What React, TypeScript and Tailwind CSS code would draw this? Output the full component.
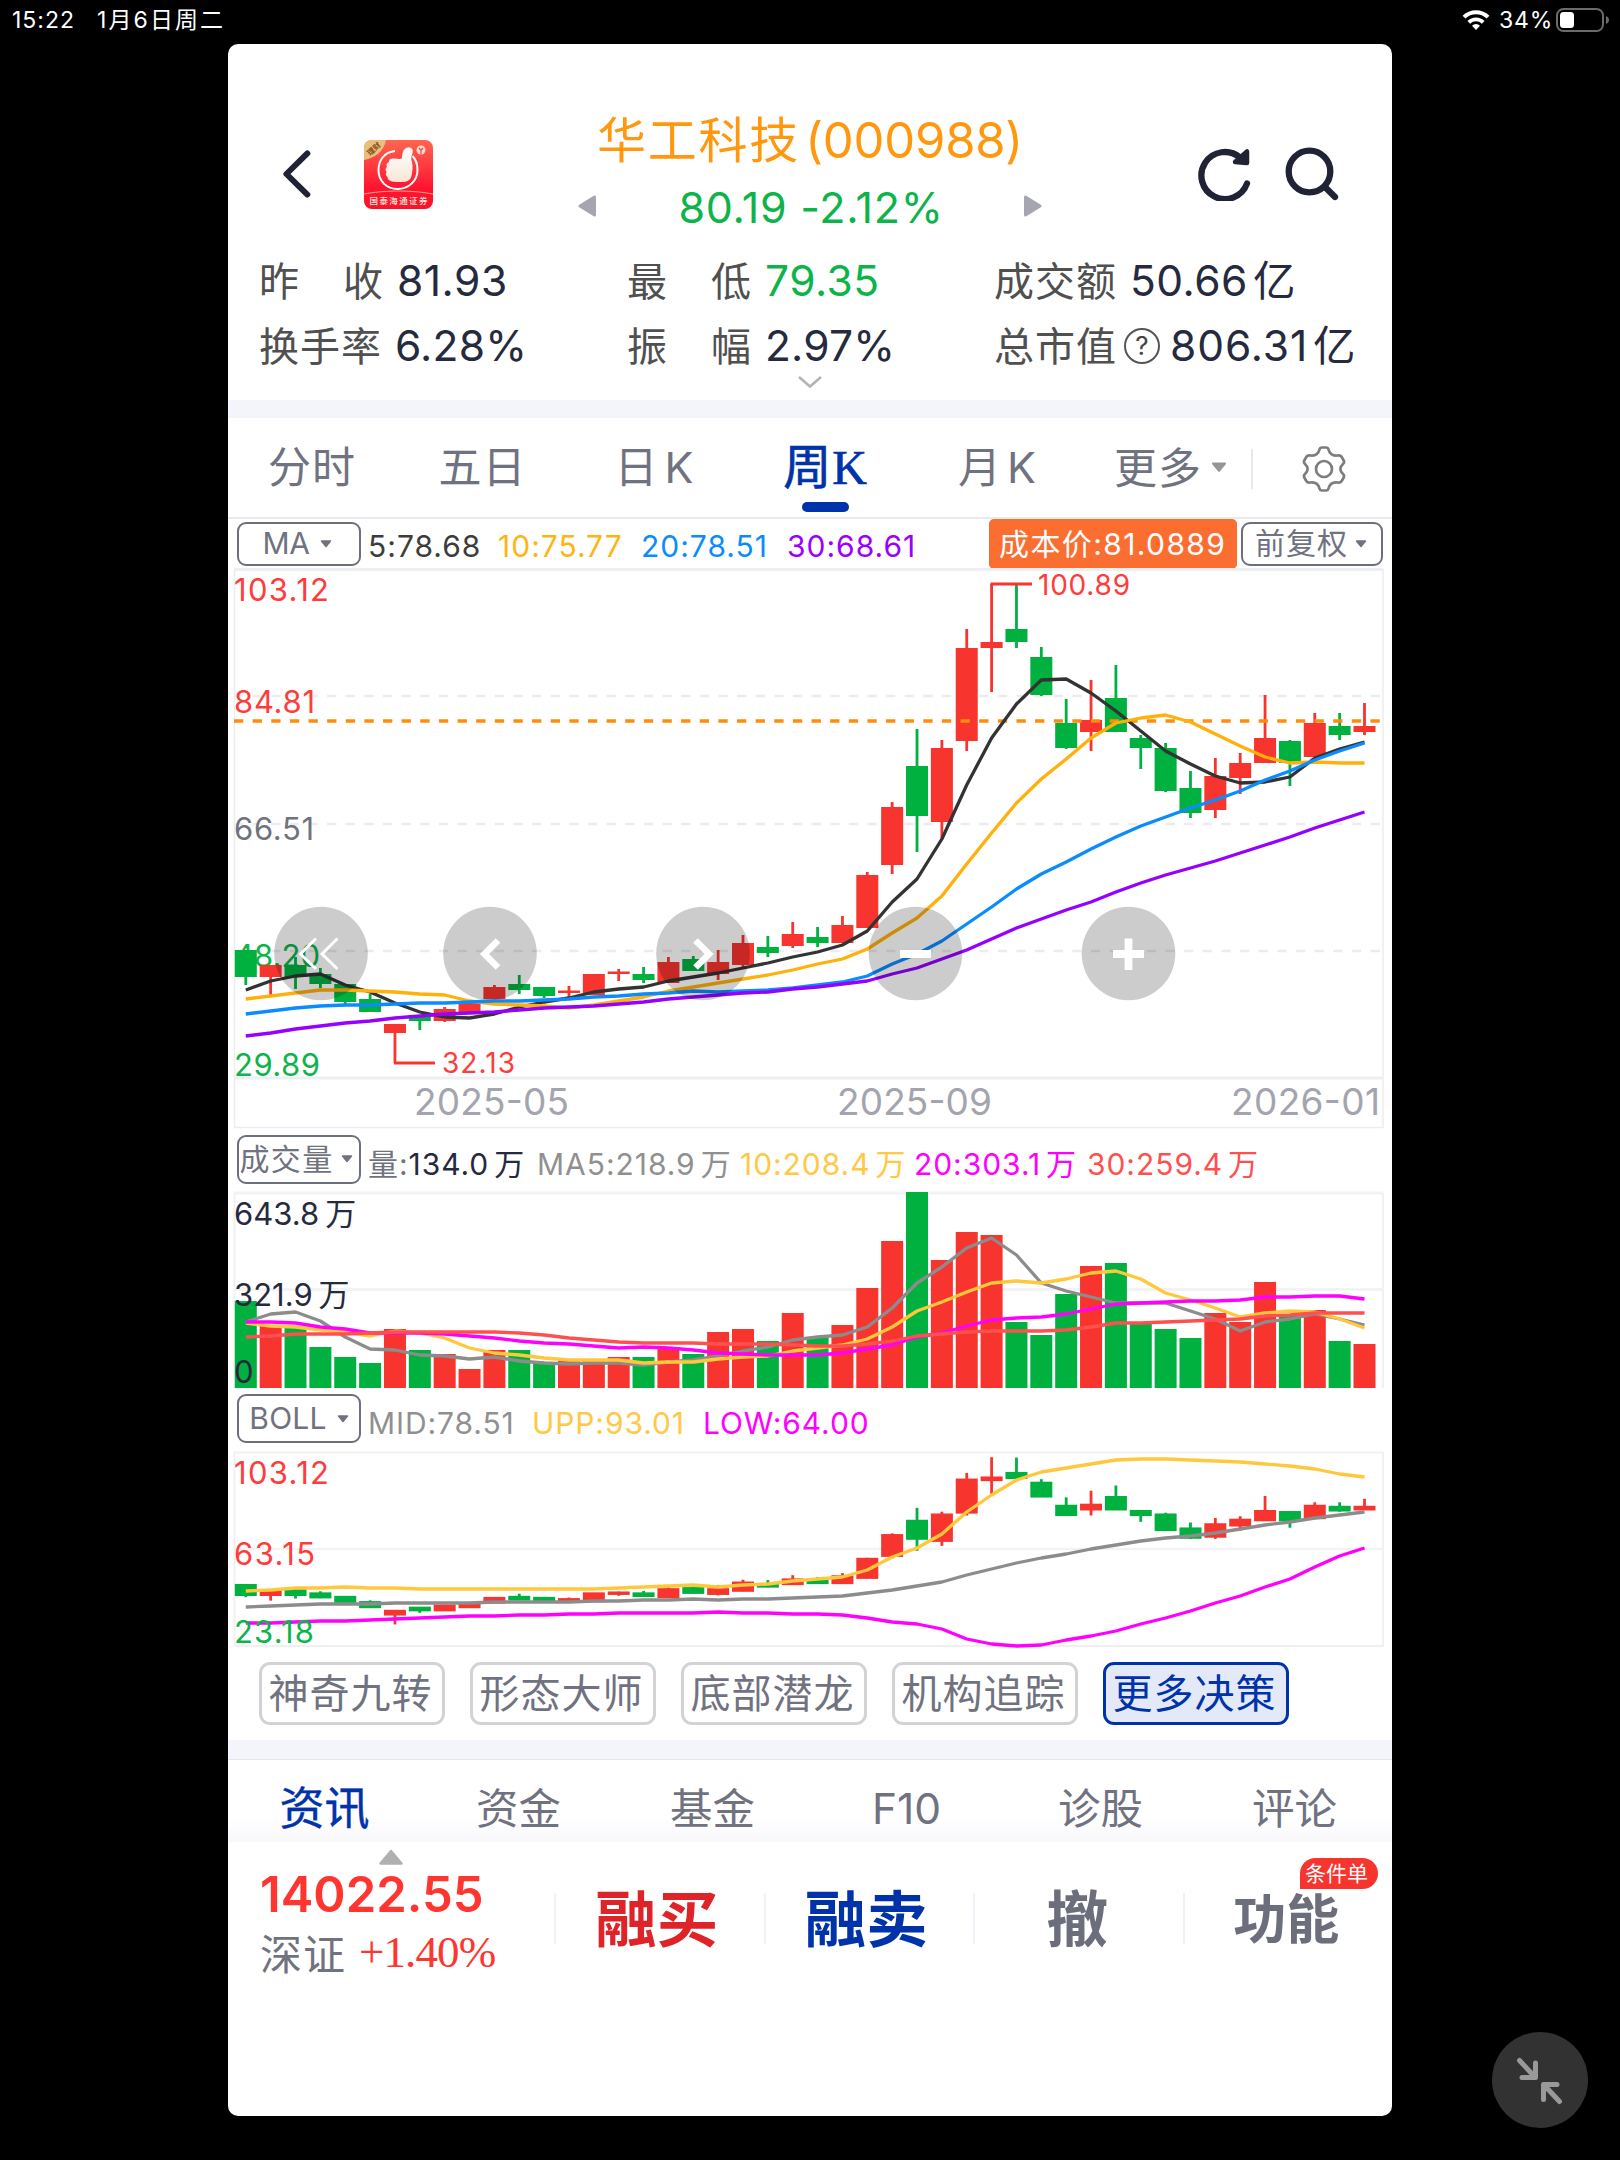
import type { ReactNode } from "react"
import clsx from "clsx"

// [up, bodyTop, bodyBottom, high, low] in chart pixels
type Candle = [number, number, number, number, number]

const CANDLES: Candle[] = [
  [0, 950, 977, 950, 985],
  [1, 965, 977, 965, 995],
  [0, 965, 977, 957, 989],
  [0, 974, 984, 968, 988],
  [0, 984, 1002, 984, 1004],
  [0, 999, 1012, 994, 1012],
  [1, 1024, 1033, 1024, 1063],
  [0, 1015, 1021, 1015, 1030],
  [1, 1009, 1021, 1007, 1022],
  [1, 1002, 1012, 1002, 1012],
  [1, 987, 999, 985, 999],
  [0, 984, 990, 975, 994],
  [0, 987, 996, 987, 998],
  [1, 990.5, 993, 986, 998],
  [1, 974, 995, 974, 995],
  [1, 971.5, 974, 969, 981],
  [0, 974, 980, 967, 983],
  [1, 962, 983, 957, 983],
  [0, 959, 971, 956, 971],
  [1, 962, 974, 950, 980],
  [1, 943, 965, 935, 968],
  [0, 947, 953, 936, 957],
  [1, 934, 946, 922, 948],
  [0, 937, 943, 927, 947],
  [1, 925, 943, 916, 943],
  [1, 875, 928, 872, 928],
  [1, 807, 865, 802, 874],
  [0, 766, 816, 729, 852],
  [1, 748, 822, 740, 838],
  [1, 648, 741, 629, 751],
  [1, 642, 648, 584, 692],
  [0, 629, 642, 585, 648],
  [0, 657, 695, 647, 696],
  [0, 723, 748, 699, 749],
  [1, 720, 732, 680, 751],
  [0, 698, 732, 665, 732],
  [0, 738, 748, 735, 769],
  [0, 748, 791, 743, 792],
  [0, 788, 813, 771, 818],
  [1, 776, 810, 758, 818],
  [1, 763, 778, 753, 794],
  [1, 738, 763, 695, 763],
  [0, 741, 763, 740, 786],
  [1, 723, 757, 713, 757],
  [0, 726, 735, 713, 740],
  [1, 726, 732, 703, 735],
]

const MA5 = [990, 981, 976, 974, 985, 992, 1003, 1012, 1017, 1018, 1014, 1007, 1002, 998, 992, 989, 987, 981, 977, 973, 968, 963, 957, 952, 945, 931, 902, 879, 839, 785, 738, 704, 680, 679, 693, 711, 731, 751, 764, 776, 783, 782, 777, 758, 749, 742]
const MA10 = [999, 996, 993, 990, 990, 991, 992, 994, 995, 1001, 1004, 1005, 1006, 1008, 1005, 1001, 997, 991, 987, 983, 979, 975, 970, 964, 959, 949, 933, 918, 896, 864, 833, 803, 779, 759, 738, 723, 718, 715, 722, 734, 746, 757, 763, 762, 763, 763]
const MA20 = [1014, 1011, 1008, 1006, 1005, 1005, 1004, 1003, 1003, 1002, 1001, 1001, 1000, 999, 997, 996, 994, 993, 991, 992, 991, 990, 988, 985, 982, 976, 964, 954, 941, 924, 907, 889, 874, 862, 849, 837, 826, 817, 808, 800, 791, 780, 771, 760, 751, 743]
const MA30 = [1036, 1033, 1029, 1026, 1023, 1021, 1018, 1016, 1014, 1013, 1012, 1010, 1008, 1007, 1006, 1004, 1002, 999, 997, 995, 993, 992, 989, 987, 984, 981, 974, 968, 959, 950, 939, 928, 919, 910, 902, 892, 883, 875, 868, 861, 853, 845, 837, 828, 820, 812]

const VOLUME = [1301, 1326, 1328, 1347, 1357, 1363, 1329, 1350, 1354, 1369, 1350, 1350, 1363, 1361, 1361, 1357, 1357, 1347, 1354, 1332, 1329, 1341, 1313, 1338, 1325, 1288, 1241, 1192, 1260, 1232, 1235, 1322, 1335, 1294, 1266, 1263, 1324, 1329, 1338, 1313, 1322, 1282, 1316, 1310, 1341, 1344]
const V5 = [1322, 1314, 1312, 1321, 1337, 1349, 1350, 1355, 1356, 1359, 1357, 1361, 1363, 1364, 1363, 1363, 1365, 1362, 1360, 1356, 1351, 1347, 1340, 1337, 1335, 1327, 1308, 1283, 1267, 1248, 1238, 1255, 1283, 1291, 1297, 1303, 1303, 1303, 1311, 1319, 1331, 1322, 1319, 1314, 1319, 1325]
const V10 = [1323, 1326, 1327, 1330, 1332, 1336, 1331, 1333, 1338, 1348, 1353, 1355, 1358, 1360, 1360, 1360, 1363, 1362, 1362, 1359, 1357, 1356, 1351, 1348, 1345, 1339, 1327, 1311, 1302, 1292, 1283, 1281, 1283, 1279, 1273, 1271, 1279, 1293, 1300, 1308, 1317, 1313, 1311, 1312, 1319, 1328]
const V20 = [1322, 1322, 1323, 1327, 1329, 1333, 1333, 1333, 1334, 1336, 1338, 1341, 1343, 1344, 1346, 1348, 1347, 1348, 1350, 1353, 1354, 1355, 1355, 1355, 1353, 1349, 1345, 1337, 1333, 1326, 1320, 1318, 1317, 1314, 1309, 1304, 1303, 1302, 1301, 1301, 1300, 1297, 1297, 1296, 1296, 1299]
const V30 = [1337, 1336, 1334, 1334, 1334, 1333, 1332, 1332, 1332, 1332, 1332, 1333, 1335, 1338, 1340, 1342, 1343, 1343, 1343, 1344, 1344, 1344, 1345, 1346, 1346, 1344, 1341, 1336, 1334, 1332, 1331, 1331, 1331, 1330, 1327, 1323, 1323, 1322, 1321, 1320, 1319, 1316, 1315, 1313, 1313, 1313]

const UPP = [1591, 1590, 1588, 1588, 1587, 1588, 1588, 1589, 1589, 1589, 1589, 1589, 1589, 1589, 1589, 1588, 1587, 1586, 1585, 1587, 1585, 1584, 1581, 1579, 1577, 1570, 1557, 1548, 1534, 1512, 1495, 1480, 1472, 1468, 1464, 1460, 1459, 1459, 1460, 1461, 1462, 1464, 1466, 1469, 1474, 1477]
const MID = [1607, 1606, 1605, 1604, 1604, 1604, 1603, 1603, 1603, 1603, 1602, 1602, 1602, 1602, 1601, 1601, 1600, 1600, 1599, 1600, 1599, 1599, 1598, 1597, 1596, 1593, 1590, 1586, 1582, 1575, 1569, 1563, 1558, 1554, 1549, 1545, 1541, 1538, 1536, 1533, 1529, 1525, 1522, 1518, 1515, 1512]
const LOW = [1623, 1623, 1622, 1621, 1621, 1620, 1619, 1618, 1617, 1616, 1616, 1615, 1615, 1614, 1614, 1613, 1613, 1613, 1613, 1612, 1613, 1613, 1614, 1614, 1615, 1618, 1622, 1624, 1629, 1639, 1644, 1646, 1645, 1640, 1636, 1631, 1624, 1618, 1611, 1603, 1596, 1587, 1579, 1567, 1556, 1548]

const RED = "#f8342e"
const GREEN = "#00b140"

const cx = (i: number) => 245.8 + i * 24.86
const bollY = (y: number) => 1452 + (y - 569) * 0.349

function Line({ data, color }: { data: number[]; color: string }) {
  return (
    <polyline
      points={data.map((y, i) => `${cx(i).toFixed(1)},${y}`).join(" ")}
      fill="none"
      stroke={color}
      strokeWidth="3.300"
      strokeLinejoin="round"
    />
  )
}

type LabelProps = { x: number; y: number; w: number; size?: number; fill: string; children: ReactNode }

function Label({ x, y, w, size = 31, fill, children }: LabelProps) {
  return (
    <text x={x} y={y} textLength={w} fontSize={size} fill={fill}>
      {children}
    </text>
  )
}

function Caret({ className }: { className?: string }) {
  return (
    <svg viewBox="0 0 12 8" className={clsx("h-2 w-3 shrink-0", className)}>
      <path d="M1.5 1h9L6 6.500z" fill="currentColor" stroke="currentColor" strokeWidth="1.500" strokeLinejoin="round" />
    </svg>
  )
}

// Keeps a small gap between the digits and their unit
function WithUnit({ value, unit }: { value: string; unit: string }) {
  return (
    <>
      {value}
      <span className="ml-[5px]">{unit}</span>
    </>
  )
}

function Legend({ items }: { items: Array<{ text: ReactNode; className: string }> }) {
  return (
    <>
      {items.map((item, i) => (
        <span key={i} className={clsx("shrink-0", item.className)}>
          {item.text}
        </span>
      ))}
    </>
  )
}

function StatusBar() {
  return (
    <div className="flex h-[44px] items-start justify-between pt-[4px] pr-[10px] pl-[12px] text-[23px] leading-[32px] text-white">
      <div className="flex">
        <span className="w-[85px] tracking-[1px]">15:22</span>
        <span className="tracking-[2.1px]">1月6日周二</span>
      </div>
      <div className="flex items-center">
        <svg viewBox="0 0 28 20" className="mr-[9px] h-5 w-7">
          <path d="M2 7.200a17 17 0 0 1 24 0" fill="none" stroke="white" strokeWidth="4" />
          <path d="M6.800 12.300a10.200 10.200 0 0 1 14.400 0" fill="none" stroke="white" strokeWidth="3.800" />
          <path d="M14 20l-4-4.200a5.600 5.600 0 0 1 8 0z" fill="white" />
        </svg>
        <span className="w-[57px] tracking-[0.8px]">34%</span>
        <svg viewBox="0 0 54 24" className="h-6 w-[54px]">
          <rect x="1" y="1" width="46" height="22" rx="6.500" fill="none" stroke="#6b6b6b" strokeWidth="2" />
          <rect x="4" y="4" width="14" height="16" rx="3.500" fill="white" />
          <path d="M50 8c4 1.500 4 6.500 0 8z" fill="#6b6b6b" />
        </svg>
      </div>
    </div>
  )
}

function BrokerLogo() {
  return (
    <svg viewBox="0 0 69 69" className="ml-[53px] h-[69px] w-[69px] rounded-[8px]">
      <defs>
        <linearGradient id="logo-bg" x1="0" y1="0" x2="0" y2="1">
          <stop offset="0" stopColor="#ff6650" />
          <stop offset="0.700" stopColor="#ff1430" />
          <stop offset="1" stopColor="#fa1428" />
        </linearGradient>
        <linearGradient id="logo-hand" x1="0" y1="0" x2="0" y2="1">
          <stop offset="0" stopColor="#ffffff" />
          <stop offset="1" stopColor="#f7e6d6" />
        </linearGradient>
      </defs>
      <rect width="69" height="69" fill="url(#logo-bg)" />
      <path d="M0 0h22C20 11 11 18 0 20z" fill="#e9bf7c" />
      <text x="10" y="11.500" textAnchor="middle" fontSize="7.500" fontWeight="700" fill="#8a4a18" transform="rotate(-42 10 9)">
        理财
      </text>
      <path d="M31 11C20 12 14.500 21 14.500 30c0 11 8 19 19 19s20-8 20-19c0-6-2-11-5-14" fill="none" stroke="#fff" strokeWidth="2" />
      <path
        d="M38 18c0-6 2-10 6-10.500c4-.5 5.500 2.500 4.500 5.500c-1.500 4-1.500 6-.5 9c1 4 .5 9-.5 14c-1 4-4 6-10 6c-9 .5-14-1-14-5c-2-1-2-4-.8-5c-1.600-1.500-1.400-4 .3-5c-1-2-.3-4.500 2-5c0-3 2-4 5-3.500c3 .5 7 1 8-.5z"
        fill="url(#logo-hand)"
      />
      <circle cx="57" cy="10" r="4.500" fill="#ffd9cf" />
      <path d="M55 8l2 2.300L59 8M57 10v4" fill="none" stroke="#f0443c" strokeWidth="1.200" />
      <path d="M0 54c20-4 49-4 69 0" fill="none" stroke="#ff9d84" strokeWidth="1.200" />
      <text x="5.500" y="64" textLength="58" fontSize="8.500" fontWeight="500" fill="#ffe3d8">
        国泰海通证券
      </text>
    </svg>
  )
}

function Header() {
  return (
    <header className="h-[356px] pt-[64px] text-[#262a3e]">
      <div className="flex h-[132px] items-center">
        <div className="flex w-[350px] items-center pl-[52px]">
          <svg viewBox="0 0 34 56" className="h-14 w-[31px]">
            <path d="M30 5.500L7 28 30 50.500" fill="none" stroke="#1f2335" strokeWidth="6.500" strokeLinecap="round" strokeLinejoin="round" />
          </svg>
          <BrokerLogo />
        </div>
        <div className="flex w-[464px] flex-col">
          <h1 className="text-center text-[49px] leading-[66px] tracking-[1.8px] whitespace-nowrap text-[#ff980f]">
            华工科技<span className="ml-[5px] tracking-[-0.2px]">(000988)</span>
          </h1>
          <div className="flex h-[66px] items-center justify-between">
            <svg viewBox="0 0 18 22" className="-mt-[3px] h-[22px] w-[18px]">
              <path d="M16.500 2v18L2 11z" fill="#a5a6b0" stroke="#a5a6b0" strokeWidth="3" strokeLinejoin="round" />
            </svg>
            <span className="pl-[2px] text-[43px] leading-[66px] tracking-[0.7px] text-[#0cb44a]">80.19 -2.12%</span>
            <svg viewBox="0 0 18 22" className="-mt-[3px] h-[22px] w-[18px]">
              <path d="M1.500 2v18L16 11z" fill="#a5a6b0" stroke="#a5a6b0" strokeWidth="3" strokeLinejoin="round" />
            </svg>
          </div>
        </div>
        <div className="flex w-[350px] items-center justify-end gap-[34px] pr-[53px]">
          <svg viewBox="0 0 54 54" className="h-[54px] w-[54px]">
            <path d="M50 36.500A23.500 23.500 0 1 1 43 10.500" fill="none" stroke="#1f2335" strokeWidth="6.300" strokeLinecap="round" />
            <path d="M50 4.500v11.500l-12-1z" fill="#1f2335" stroke="#1f2335" strokeWidth="4.500" strokeLinejoin="round" />
          </svg>
          <svg viewBox="0 0 54 54" className="h-[54px] w-[54px]">
            <circle cx="24.500" cy="24.500" r="20.800" fill="none" stroke="#1f2335" strokeWidth="6.300" />
            <path d="M41 41l9 9" stroke="#1f2335" strokeWidth="6.300" strokeLinecap="round" />
          </svg>
        </div>
      </div>

      <div className="mt-[8px] grid grid-cols-[368px_367px_1fr] grid-rows-[65px_65px] pl-[31px] text-[42.5px] leading-[65px] whitespace-nowrap">
        <Stat label="昨收" value="81.93" />
        <Stat label="最低" value="79.35" className="text-[#0cb44a]" />
        <Stat label="成交额" value={<WithUnit value="50.66" unit="亿" />} />
        <Stat label="换手率" value="6.28%" className="tracking-[0.2px]!" />
        <Stat label="振幅" value="2.97%" className="tracking-[0.2px]!" />
        <Stat
          label="总市值"
          value={<WithUnit value="806.31" unit="亿" />}
          className="tracking-[0.9px]!"
          badge={
            <span className="mr-[10px] ml-[8px] flex h-9 w-9 items-center justify-center rounded-full border-[2px] border-[#555] text-[26px] leading-none text-[#444]">
              ?
            </span>
          }
        />
      </div>
      <svg viewBox="0 0 26 14" className="mx-auto -mt-[3px] block h-[14px] w-[26px]">
        <path d="M2 2l11 9.500L24 2" fill="none" stroke="#b4b4b4" strokeWidth="2.500" />
      </svg>
    </header>
  )
}

function Stat({ label, value, badge, className }: { label: string; value: ReactNode; badge?: ReactNode; className?: string }) {
  return (
    <div className="flex items-center">
      <span
        className={clsx("flex justify-between pt-[2px] text-[40px] leading-[63px] text-[#505050]", label.length === 2 ? "w-[124px]" : "w-[122px]")}
      >
        {label.split("").map((char) => (
          <span key={char}>{char}</span>
        ))}
      </span>
      {badge ?? <span className="w-[14px]" />}
      <span className={clsx("tracking-[0.5px]", className)}>{value}</span>
    </div>
  )
}

function PeriodTabs() {
  return (
    <nav className="flex h-[101px] border-b-2 border-[#ebebee] text-[43px] leading-[98px] tracking-[1px] text-[#70727f]">
      <span className="w-[168px] text-center">分时</span>
      <span className="w-[168px] pl-[5px] text-center">五日</span>
      <span className="w-[186px] pr-[5px] text-center">
        日<span className="ml-[6px]">K</span>
      </span>
      <span className="flex w-[151px] flex-col items-center text-[#0032aa]">
        <span className="h-[84px] text-[48px] leading-[99px] [-webkit-text-stroke:0.7px_#0032aa] [font-family:'Liberation_Serif','Noto_Sans_CJK_SC',serif]">
          周K
        </span>
        <span className="h-[10px] w-[47px] rounded-full bg-[#0032aa]" />
      </span>
      <span className="w-[193px] text-center">
        月<span className="ml-[5px]">K</span>
      </span>
      <span className="flex w-[157px] items-center pl-[20px]">
        更多
        <Caret className="ml-[9px] h-[11px]! w-[16px]! text-[#969696]" />
      </span>
      <span className="mt-[31px] h-[40px] w-[2px] bg-[#e8e8ec]" />
      <svg viewBox="0 0 44 46" className="mt-[28px] ml-[49px] h-[46px] w-[44px]">
        <path
          d="M17.500 3.500Q18 1.500 20 1.500h4q2 0 2.500 2c1 4 4 6.500 9 6q3-.5 4.200 1.500l2 3.500q1 2-.7 3.500c-3.500 3-3.500 7 0 10q1.700 1.500.7 3.500l-2 3.500q-1.200 2-4.200 1.500c-5-.5-8 2-9 6q-.5 2-2.500 2h-4q-2 0-2.500-2c-1-4-4-6.500-9-6q-3 .5-4.200-1.500l-2-3.500q-1-2 .7-3.500c3.500-3 3.500-7 0-10q-1.700-1.500-.7-3.500l2-3.500q1.200-2 4.200-1.500c5 .5 8-2 9-6z"
          fill="none"
          stroke="#7d7d7d"
          strokeWidth="2.700"
        />
        <circle cx="22" cy="23" r="8" fill="none" stroke="#7d7d7d" strokeWidth="2.700" />
      </svg>
    </nav>
  )
}

const boxClass = "flex shrink-0 items-center justify-center rounded-[9px] border-2 border-[#6c6f7e] text-[#70727f]"

function PriceChart() {
  return (
    <section>
      <div className="flex h-[49px] items-center pl-[9px] text-[30px] whitespace-nowrap">
        <div className={clsx(boxClass, "h-[44px] w-[124px] pr-[3px] tracking-[-0.5px]")}>
          MA
          <Caret className="ml-[11px]" />
        </div>
        <div className="flex w-[628px] pt-[4px] pl-[7px] leading-[44px] tracking-[1px]">
          <Legend
            items={[
              { text: "5:78.68", className: "w-[130px] text-[#3c3c3c]" },
              { text: "10:75.77", className: "w-[143px] text-[#ffb414]" },
              { text: "20:78.51", className: "w-[146px] text-[#0a8cff]" },
              { text: "30:68.61", className: "text-[#9b00ff]" },
            ]}
          />
        </div>
        <div className="h-[50px] w-[248px] rounded-[5px] bg-[#fa6e32] pl-[10px] leading-[51px] tracking-[1.4px] text-white">成本价:81.0889</div>
        <div className={clsx(boxClass, "ml-[4px] h-[44px] w-[142px] pr-[2px]")}>
          <span className="tracking-[1px]">前复权</span>
          <Caret className="ml-[7px]" />
        </div>
      </div>

      <svg viewBox="228 568 1164 562" className="block h-[562px] w-[1164px]">
        <path d="M234 569.500H1383M234 1078H1383" stroke="#edeff0" strokeWidth="3" />
        <path d="M234.500 569V1127.500H1383V569" fill="none" stroke="#ebedee" strokeWidth="1.500" />
        <path d="M234 696H1381M234 824H1381M234 951H1381" stroke="#ececee" strokeWidth="2.500" strokeDasharray="9.300 9.330" />
        <Label x={234} y={601} w={95} fill="#ff3c3c">103.12</Label>
        <Label x={234} y={712.5} w={81} fill="#ff3c3c">84.81</Label>
        <Label x={234} y={840} w={80} fill="#70727f">66.51</Label>
        <Label x={234} y={966.5} w={86} fill="#0cb44a">48.20</Label>
        <Label x={234} y={1076} w={86} fill="#0cb44a">29.89</Label>
        {CANDLES.map(([up, top, bottom, high, low], i) => (
          <g key={i} fill={up ? RED : GREEN}>
            <rect x={cx(i) - 1.4} y={high} width="2.800" height={low - high} />
            <rect x={cx(i) - 11} y={top} width="22" height={bottom - top} />
          </g>
        ))}
        <path d="M990.500 584H1032M394 1063H435" stroke={RED} strokeWidth="2.800" />
        <Label x={1038} y={594.5} w={92} size={28} fill="#ff3c3c">100.89</Label>
        <Label x={442} y={1072.5} w={73} size={28} fill="#ff3c3c">32.13</Label>
        <path d="M234 721H1381" stroke="#ff8c0a" strokeWidth="3.300" strokeDasharray="9.300 9.330" />
        <Line data={MA5} color="#333333" />
        <Line data={MA10} color="#ffb00a" />
        <Line data={MA20} color="#0a8cff" />
        <Line data={MA30} color="#9600ff" />
        <Label x={414} y={1115} w={155} size={37} fill="#a3a4ad">2025-05</Label>
        <Label x={837} y={1115} w={155} size={37} fill="#a3a4ad">2025-09</Label>
        <Label x={1231} y={1115} w={149} size={37} fill="#a3a4ad">2026-01</Label>

        {[321, 490, 703, 915.5, 1128.5].map((x) => (
          <circle key={x} cx={x} cy="953.500" r="46.800" fill="#000" fillOpacity="0.200" />
        ))}
        <g fill="none" stroke="#fff">
          <path d="M316 938.500L300.500 954 316 969M337.500 938.500L322 954l15.500 15" strokeWidth="3" />
          <path d="M498 940.500L484.500 954l13.500 13.500" strokeWidth="6.500" />
          <path d="M695.500 940.500L709 954l-13.500 13.500" strokeWidth="6.500" />
          <path d="M900 954h31M1113 954h31M1128.500 938.500v31.500" strokeWidth="7.800" />
        </g>
      </svg>
    </section>
  )
}

function VolumeChart() {
  return (
    <section>
      <div className="flex h-[60px] items-center pl-[9px] text-[30px] whitespace-nowrap">
        <div className={clsx(boxClass, "-mt-[2px] h-[49px] w-[124px] pr-[5px]")}>
          <span className="tracking-[1.3px]">成交量</span>
          <Caret className="ml-[8px]" />
        </div>
        <div className="flex pt-[8px] pl-[7px] leading-[44px] tracking-[0.95px]">
          <Legend
            items={[
              {
                text: (
                  <>
                    量:
                    <span className="text-[#262a3e]">
                      <WithUnit value="134.0" unit="万" />
                    </span>
                  </>
                ),
                className: "w-[169px] text-[#70727f]",
              },
              { text: <WithUnit value="MA5:218.9" unit="万" />, className: "w-[203px] text-[#909090]" },
              { text: <WithUnit value="10:208.4" unit="万" />, className: "w-[174px] text-[#ffc846]" },
              { text: <WithUnit value="20:303.1" unit="万" />, className: "w-[173px] text-[#ff00ff]" },
              { text: <WithUnit value="30:259.4" unit="万" />, className: "text-[#ff5050]" },
            ]}
          />
        </div>
      </div>
      <svg viewBox="228 1190 1164 200" className="block h-[200px] w-[1164px]">
        <path d="M234 1193H1383M234 1289.500H1383" stroke="#f3f3f5" strokeWidth="3" />
        <path d="M234.500 1193V1388M1383 1193V1388" stroke="#f0f0f2" strokeWidth="1.800" />
        {VOLUME.map((top, i) => (
          <rect key={i} x={cx(i) - 11} y={top} width="22" height={1388 - top} fill={CANDLES[i][0] ? RED : GREEN} />
        ))}
        <Line data={V5} color="#8c8c8c" />
        <Line data={V10} color="#ffc83c" />
        <Line data={V20} color="#ff00ff" />
        <Line data={V30} color="#ff5050" />
        <text x="234" y="1225" fontSize="31" fill="#262a3e">
          643.8<tspan dx="6">万</tspan>
        </text>
        <text x="234" y="1305.500" fontSize="31" fill="#262a3e">
          321.9<tspan dx="6">万</tspan>
        </text>
        <Label x={234} y={1383} w={19} fill="#262a3e">0</Label>
      </svg>
    </section>
  )
}

function BollChart() {
  return (
    <section>
      <div className="flex h-[60px] items-center pl-[9px] text-[30px] whitespace-nowrap">
        <div className={clsx(boxClass, "-mt-[3px] h-[49px] w-[124px] tracking-[0.2px]")}>
          BOLL
          <Caret className="ml-[10px]" />
        </div>
        <div className="flex pt-[6px] pl-[7px] leading-[44px] tracking-[0.9px]">
          <Legend
            items={[
              { text: "MID:78.51", className: "w-[164px] text-[#909090]" },
              { text: "UPP:93.01", className: "w-[171px] text-[#ffc846]" },
              { text: "LOW:64.00", className: "text-[#ff00ff]" },
            ]}
          />
        </div>
      </div>
      <svg viewBox="228 1450 1164 200" className="block h-[200px] w-[1164px]">
        <path d="M234 1452.500H1383M234 1549H1383" stroke="#f3f3f5" strokeWidth="2.500" />
        <path d="M234.500 1452V1646H1383V1452" fill="none" stroke="#eff0f2" strokeWidth="1.800" />
        {CANDLES.map(([up, top, bottom, high, low], i) => (
          <g key={i} fill={up ? RED : GREEN}>
            <rect x={cx(i) - 1.4} y={bollY(high)} width="2.800" height={bollY(low) - bollY(high)} />
            <rect x={cx(i) - 11} y={bollY(top) - 1} width="22" height={bollY(bottom) - bollY(top) + 2.6} />
          </g>
        ))}
        <Line data={UPP} color="#ffc83c" />
        <Line data={MID} color="#8c8c8c" />
        <Line data={LOW} color="#ff00ff" />
        <Label x={234} y={1484} w={95} fill="#ff3c3c">103.12</Label>
        <Label x={234} y={1565} w={81} fill="#ff3c3c">63.15</Label>
        <Label x={234} y={1642.5} w={80} fill="#0cb44a">23.18</Label>
      </svg>
    </section>
  )
}

const TOOLS = ["神奇九转", "形态大师", "底部潜龙", "机构追踪", "更多决策"]
const INFO_TABS = ["资讯", "资金", "基金", "F10", "诊股", "评论"]

function BottomBar() {
  return (
    <footer className="flex h-[150px] bg-white">
      <div className="flex w-[326px] flex-col pt-[6px] pl-[32px]">
        <svg viewBox="0 0 26 17" className="ml-[118px] h-[17px] w-[26px]">
          <path d="M13 3l10.500 12.500h-21z" fill="#b0b0b0" stroke="#b0b0b0" strokeWidth="2.500" strokeLinejoin="round" />
        </svg>
        <span className="text-[49px] leading-[59px] font-semibold text-[#ff3530]">14022.55</span>
        <span className="flex text-[42px] leading-[61px] tracking-[1px] text-[#70727f]">
          深证
          <span className="ml-[13px] text-[45px] leading-[57px] tracking-[-0.9px] text-[#ff3530] [font-family:'Liberation_Serif',serif]">
            +1.40%
          </span>
        </span>
      </div>
      <ActionCell className="pr-[6px] text-[#de2429]">融买</ActionCell>
      <ActionCell className="pr-[6px] text-[#0032aa]">融卖</ActionCell>
      <ActionCell className="pr-[3px] text-[#6c6e7b]">撤</ActionCell>
      <ActionCell className="pr-[4px] text-[53px]! leading-[156px]! text-[#6c6e7b]">
        功能
        <span className="absolute top-[16px] right-[14px] h-[31px] w-[78px] rounded-full rounded-bl-none bg-[#f8342e] pl-[5px] text-left text-[21px] leading-[32px] font-normal text-white">
          条件单
        </span>
      </ActionCell>
    </footer>
  )
}

function ActionCell({ className, children }: { className?: string; children: ReactNode }) {
  return (
    <div className="relative flex flex-1 items-start">
      <span className="mt-[51px] h-[51px] w-[2px] bg-[#f1f2f8]" />
      <span className={clsx("flex-1 text-center text-[61.5px] leading-[155px] font-bold", className)}>{children}</span>
    </div>
  )
}

export default function App() {
  return (
    <div className="relative h-[2160px] w-[1620px] overflow-hidden bg-black [font-family:Inter,'Noto_Sans_CJK_SC',sans-serif]">
      <StatusBar />
      <main className="mx-auto h-[2072px] w-[1164px] overflow-hidden rounded-[10px] bg-white">
        <Header />
        <div className="h-[18px] bg-[#f4f5fa]" />
        <PeriodTabs />
        <PriceChart />
        <VolumeChart />
        <BollChart />

        <div className="flex h-[90px] gap-[25px] pt-[12px] pl-[31px]">
          {TOOLS.map((tool, i) => (
            <button
              key={tool}
              className={clsx(
                "h-[63px] w-[186px] rounded-[11px] border-[3px] pt-[1px] pr-[3px] text-[40px] leading-[56px] tracking-[1px] whitespace-nowrap",
                i === 4 ? "border-[#0032aa] bg-[#e3e9f6] text-[#0032aa]" : "border-[#d3d3d6] text-[#70727f]"
              )}
            >
              {tool}
            </button>
          ))}
        </div>

        <div className="h-[20px] border-b border-[#e6e7ec] bg-[#f4f5fa]" />
        <nav className="grid h-[82px] grid-cols-6 bg-gradient-to-b from-white from-70% to-[#f8f8fb] text-center text-[42.5px] leading-[98px] text-[#70727f]">
          {INFO_TABS.map((tab, i) => (
            <span key={tab} className={clsx("pr-[1px]", i === 0 && "text-[45px] text-[#0032aa] [-webkit-text-stroke:0.4px_#0032aa]")}>
              {tab}
            </span>
          ))}
        </nav>
        <BottomBar />
      </main>

      <div className="absolute right-[32px] bottom-[32px] flex h-24 w-24 items-center justify-center rounded-full bg-[#323232]">
        <svg viewBox="0 0 96 96" className="h-24 w-24">
          <path
            d="M27.500 28.500L42 44M43.500 31v14.500H30M67.500 69.500L53 54M65 52.500H51.500V67.500"
            fill="none"
            stroke="#999"
            strokeWidth="5"
            strokeLinecap="round"
            strokeLinejoin="round"
          />
        </svg>
      </div>
    </div>
  )
}
